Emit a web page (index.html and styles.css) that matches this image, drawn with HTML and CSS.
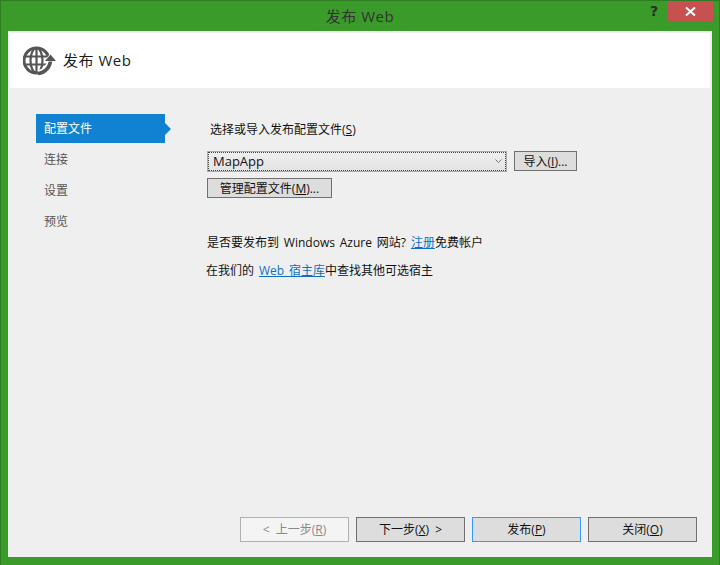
FILE: index.html
```html
<!DOCTYPE html>
<html lang="zh-CN">
<head>
<meta charset="utf-8">
<title>发布 Web</title>
<link rel="stylesheet" href="styles.css">
</head>
<body>
<div class="window">
  <div class="titlebar">
    <div class="title">发布 Web</div>
    <div class="help">?</div>
    <div class="close">
      <svg width="11" height="9" viewBox="0 0 11 9"><path d="M1 0.5 L10 8.5 M10 0.5 L1 8.5" stroke="#fff" stroke-width="2" fill="none"/></svg>
    </div>
  </div>
  <div class="client">
    <div class="header">
      <svg class="globe" width="34" height="30" viewBox="0 0 34 30">
        <g fill="none" stroke="#555">
          <circle cx="13.5" cy="14.5" r="12.5" stroke-width="3"/>
          <ellipse cx="13.5" cy="14.5" rx="6" ry="12.5" stroke-width="2.2"/>
          <path d="M13.5 2 V27 M2 10.5 H25 M2 18.5 H25" stroke-width="2.2"/>
          <path d="M27.5 13 A14 14 0 0 1 15 27.5" stroke="#fff" stroke-width="7"/>
          <path d="M27.5 13 A14 14 0 0 1 15 27.5" stroke-width="3.6"/>
        </g>
        <path d="M27.5 7 L34 15.5 L21 15.5 Z" fill="#fff"/>
        <path d="M27.5 8.5 L33 15 L22 15 Z" fill="#555"/>
      </svg>
      <div class="header-title">发布 Web</div>
    </div>
    <div class="body">
      <div class="sidebar">
        <div class="nav active">配置文件</div>
        <div class="nav">连接</div>
        <div class="nav">设置</div>
        <div class="nav">预览</div>
      </div>
      <div class="main">
        <div class="label">选择或导入发布配置文件(<u>S</u>)</div>
        <div class="combo-row">
          <div class="combo">
            <span class="combo-text">MapApp</span>
            <svg width="7" height="5" viewBox="0 0 7 5"><path d="M0.5 0.5 L3.5 3.5 L6.5 0.5" stroke="#777" fill="none"/></svg>
          </div>
          <button class="btn import">导入(<u>I</u>)...</button>
        </div>
        <button class="btn manage">管理配置文件(<u>M</u>)...</button>
        <p class="line first">是否要发布到 Windows Azure 网站? <a href="#">注册</a>免费帐户</p>
        <p class="line second">在我们的 <a href="#">Web 宿主库</a>中查找其他可选宿主</p>
      </div>
    </div>
    <div class="footer">
      <button class="btn wide disabled">&lt; 上一步(<u>R</u>)</button>
      <button class="btn wide">下一步(<u>X</u>) &gt;</button>
      <button class="btn wide default">发布(<u>P</u>)</button>
      <button class="btn wide">关闭(<u>O</u>)</button>
    </div>
  </div>
</div>
</body>
</html>
```
FILE: styles.css
```css
* { box-sizing: border-box; }
html, body { margin: 0; padding: 0; }
body {
  width: 720px;
  height: 565px;
  overflow: hidden;
  font-family: "Open Sans", "Noto Sans CJK SC", sans-serif;
  font-size: 12px;
  color: #111;
}
.window {
  width: 720px;
  height: 565px;
  background: #3a9a2a;
  border: 1px solid #2f7d22;
  border-bottom: 0;
  display: flex;
  flex-direction: column;
  padding: 0 7px 8px 7px;
}
.titlebar {
  height: 30px;
  display: flex;
  align-items: flex-start;
  position: relative;
  flex: none;
}
.title {
  position: absolute;
  left: 0;
  right: 0;
  top: 5px;
  text-align: center;
  font-size: 15px;
  letter-spacing: 0.5px;
  line-height: 20px;
  color: #333;
}
.help {
  margin-left: auto;
  width: 14px;
  margin-top: 1px;
  font-family: "DejaVu Sans", sans-serif;
  font-weight: bold;
  font-size: 14px;
  line-height: 18px;
  color: #2b2b2b;
  text-align: center;
  margin-right: 7px;
}
.close {
  width: 45px;
  height: 20px;
  background: #c75050;
  display: flex;
  align-items: center;
  justify-content: center;
  margin-right: -1px;
}
.client {
  flex: 1;
  background: #efefef;
  display: flex;
  flex-direction: column;
  padding: 2px 2px 0 2px;
}
.header {
  height: 55px;
  background: #fff;
  display: flex;
  align-items: center;
  padding-left: 13px;
  flex: none;
}
.globe { flex: none; margin-right: 6px; }
.header-title {
  font-size: 15px;
  letter-spacing: 0.5px;
  color: #1a1a1a;
  line-height: 20px;
  margin-top: -1px;
}
.body {
  flex: 1;
  display: flex;
  padding-top: 26px;
}
.sidebar {
  width: 155px;
  padding-left: 26px;
  flex: none;
}
.nav {
  height: 29px;
  line-height: 30px;
  padding-left: 8px;
  margin-bottom: 2px;
  color: #555;
}
.nav.active {
  background: #1182d2;
  color: #fff;
  position: relative;
}
.nav.active::after {
  content: "";
  position: absolute;
  left: 100%;
  top: 9px;
  border-left: 6px solid #1182d2;
  border-top: 6px solid transparent;
  border-bottom: 6px solid transparent;
}
.main {
  flex: 1;
  padding-left: 42px;
}
.label {
  padding-left: 3px;
  line-height: 16px;
  margin-top: 8px;
}
u { text-underline-offset: 1px; }
.combo-row {
  display: flex;
  align-items: flex-start;
  margin-top: 13px;
  margin-bottom: 6px;
}
.combo {
  width: 300px;
  height: 21px;
  border: 1px solid #a9a9a9;
  background: linear-gradient(#efefef, #e3e3e3);
  outline: 1px dotted #444;
  outline-offset: -2px;
  display: flex;
  align-items: center;
  justify-content: space-between;
  padding: 0 4px 1px 5px;
  font-size: 13px;
  margin-right: 7px;
}
.combo-text { line-height: 18px; }
.btn {
  font-family: inherit;
  font-size: 12px;
  height: 20px;
  padding: 0;
  background: #dddddd;
  border: 1px solid #707070;
  color: #111;
  line-height: 16px;
  display: block;
  border-radius: 0;
}
.import { width: 63px; padding-top: 1px; }
.manage { width: 125px; padding-top: 1px; }
.line { margin: 0; line-height: 16px; word-spacing: 1.75px; }
.line a { color: #0f6fc6; text-decoration: underline; }
.first { margin-top: 37px; }
.second { margin-top: 12px; margin-left: -1px; }
.footer {
  display: flex;
  justify-content: flex-end;
  gap: 7px;
  padding-right: 13px;
  padding-bottom: 15px;
}
.wide { width: 109px; height: 25px; word-spacing: 3px; }
.disabled {
  background: #f4f4f4;
  border-color: #adb2b5;
  color: #888;
}
.default { border-color: #3399ff; }
```
